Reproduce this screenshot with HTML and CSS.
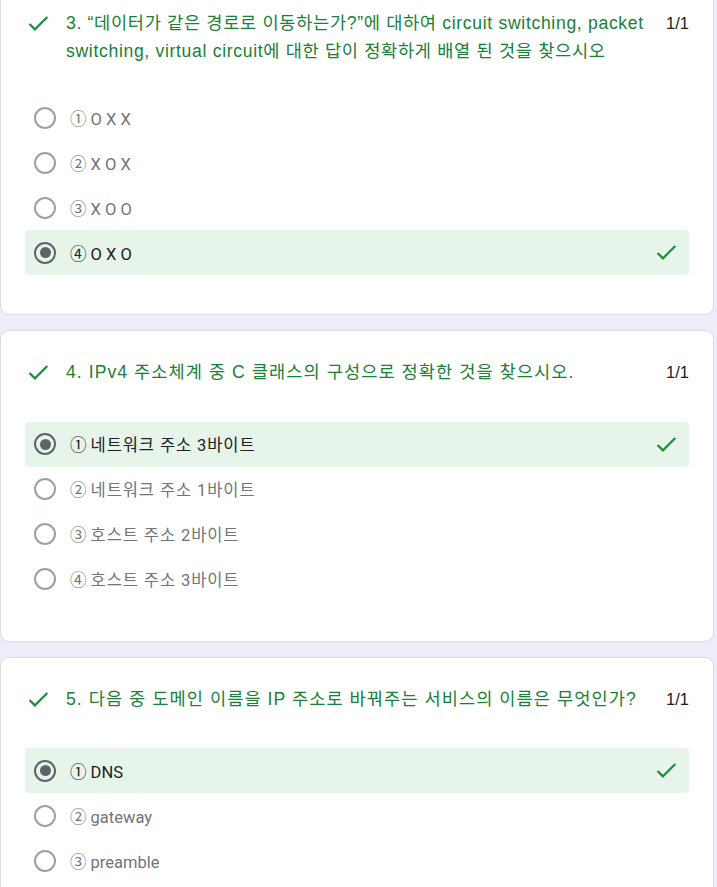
FILE: index.html
```html
<!DOCTYPE html>
<html lang="ko">
<head>
<meta charset="utf-8">
<title>Quiz results</title>
<link rel="stylesheet" href="styles.css">
</head>
<body>
<div class="page">
  <section class="card">
    <div class="q-head">
      <svg class="q-check" viewBox="0 0 24 24"><path d="M9 16.17L4.83 12l-1.42 1.41L9 19 21 7l-1.41-1.41z"/></svg>
      <div class="q-title q-title--mixed">3. “데이터가 같은 경로로 이동하는가?”에 대하여 circuit switching, packet switching, virtual circuit에 대한 답이 정확하게 배열 된 것을 찾으시오</div>
      <div class="q-points">1/1</div>
    </div>
    <ul class="options">
      <li class="opt"><span class="radio"></span><span class="opt-label">① O X X</span></li>
      <li class="opt"><span class="radio"></span><span class="opt-label">② X O X</span></li>
      <li class="opt"><span class="radio"></span><span class="opt-label">③ X O O</span></li>
      <li class="opt opt--correct"><span class="radio radio--on"></span><span class="opt-label">④ O X O</span><svg class="opt-check" viewBox="0 0 24 24"><path d="M9 16.17L4.83 12l-1.42 1.41L9 19 21 7l-1.41-1.41z"/></svg></li>
    </ul>
  </section>

  <section class="card">
    <div class="q-head">
      <svg class="q-check" viewBox="0 0 24 24"><path d="M9 16.17L4.83 12l-1.42 1.41L9 19 21 7l-1.41-1.41z"/></svg>
      <div class="q-title">4. IPv4 주소체계 중 C 클래스의 구성으로 정확한 것을 찾으시오.</div>
      <div class="q-points">1/1</div>
    </div>
    <ul class="options">
      <li class="opt opt--correct"><span class="radio radio--on"></span><span class="opt-label">① <span class="ko">네트워크 주소 3바이트</span></span><svg class="opt-check" viewBox="0 0 24 24"><path d="M9 16.17L4.83 12l-1.42 1.41L9 19 21 7l-1.41-1.41z"/></svg></li>
      <li class="opt"><span class="radio"></span><span class="opt-label">② <span class="ko">네트워크 주소 1바이트</span></span></li>
      <li class="opt"><span class="radio"></span><span class="opt-label">③ <span class="ko">호스트 주소 2바이트</span></span></li>
      <li class="opt"><span class="radio"></span><span class="opt-label">④ <span class="ko">호스트 주소 3바이트</span></span></li>
    </ul>
  </section>

  <section class="card">
    <div class="q-head">
      <svg class="q-check" viewBox="0 0 24 24"><path d="M9 16.17L4.83 12l-1.42 1.41L9 19 21 7l-1.41-1.41z"/></svg>
      <div class="q-title">5. 다음 중 도메인 이름을 IP 주소로 바꿔주는 서비스의 이름은 무엇인가?</div>
      <div class="q-points">1/1</div>
    </div>
    <ul class="options">
      <li class="opt opt--correct"><span class="radio radio--on"></span><span class="opt-label">① DNS</span><svg class="opt-check" viewBox="0 0 24 24"><path d="M9 16.17L4.83 12l-1.42 1.41L9 19 21 7l-1.41-1.41z"/></svg></li>
      <li class="opt"><span class="radio"></span><span class="opt-label">② gateway</span></li>
      <li class="opt"><span class="radio"></span><span class="opt-label">③ preamble</span></li>
    </ul>
  </section>
</div>
</body>
</html>
```

FILE: styles.css
```css
html, body {
  margin: 0;
  padding: 0;
  background: #f0ebf8;
}

body {
  font-family: "Liberation Sans", Arial, "Noto Sans CJK KR", sans-serif;
  color: #202124;
  overflow: hidden;
}

.page {
  width: 714px;
  margin-top: -19px;
  display: flex;
  flex-direction: column;
  gap: 15px;
}

.card {
  background: #fff;
  border: 1px solid #dadce0;
  border-radius: 9px;
  padding: 28px 24px 39px 24px;
}

.q-head {
  display: flex;
  align-items: flex-start;
  min-height: 32.5px;
  margin-bottom: 30px;
}

.q-check {
  flex: none;
  width: 26.4px;
  height: 26.4px;
  fill: #1e8e3e;
  margin-right: 14.6px;
}

.q-title {
  flex: 1;
  font-size: 17.6px;
  line-height: 27.5px;
  letter-spacing: 1.05px;
  color: #188038;
  margin-right: 12px;
}

.q-title--mixed {
  letter-spacing: 0.67px;
}

.q-points {
  flex: none;
  font-size: 16.5px;
  line-height: 27.5px;
  color: #202124;
}

.options {
  list-style: none;
  margin: 0;
  padding: 0;
}

.opt {
  display: flex;
  align-items: center;
  height: 45px;
  padding: 0 10px 0 9px;
  border-radius: 4px;
}

.opt--correct {
  background: #e6f4ea;
}

.radio {
  flex: none;
  box-sizing: border-box;
  width: 22px;
  height: 22px;
  border: 2.2px solid #9aa0a6;
  border-radius: 50%;
  margin-right: 14px;
  display: flex;
  align-items: center;
  justify-content: center;
}

.radio--on {
  border-color: #5f6368;
}

.radio--on::after {
  content: "";
  width: 11px;
  height: 11px;
  border-radius: 50%;
  background: #5f6368;
}

.opt-label {
  flex: 1;
  font-family: Roboto, "Liberation Sans", "Noto Sans CJK KR", sans-serif;
  font-size: 16.5px;
  color: #70757a;
}

.opt-label .ko {
  letter-spacing: 0.9px;
}

.opt--correct .opt-label {
  color: #202124;
}

.opt-check {
  flex: none;
  width: 26.4px;
  height: 26.4px;
  fill: #1e8e3e;
}
```
